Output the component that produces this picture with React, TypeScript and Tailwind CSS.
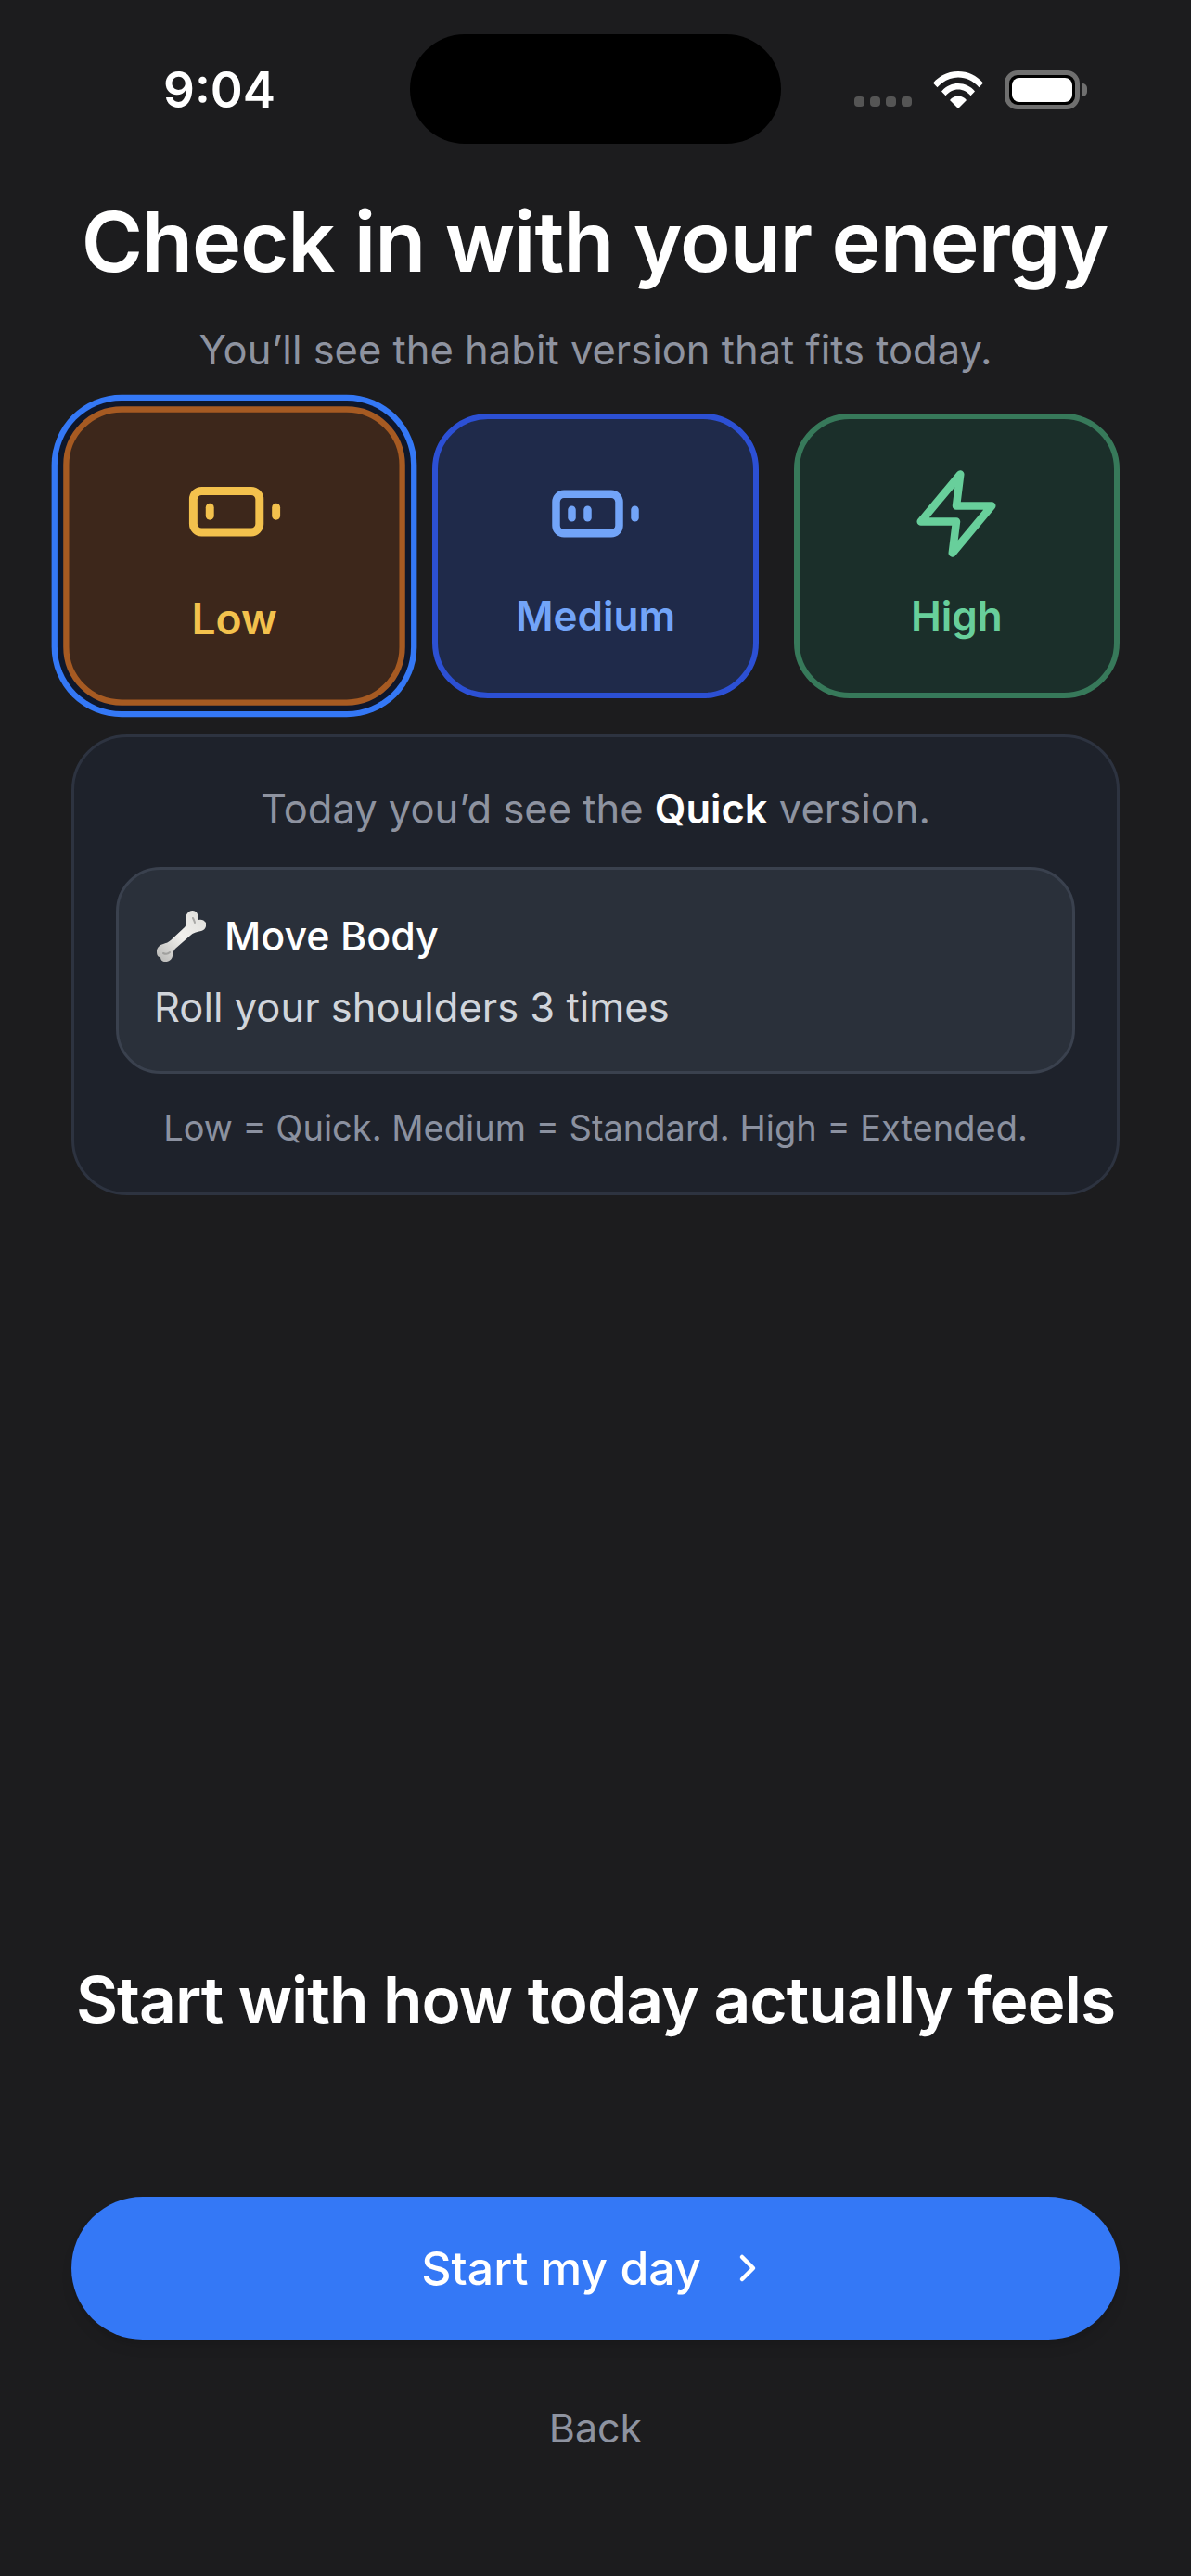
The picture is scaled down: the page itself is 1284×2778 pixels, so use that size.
import { ChevronRight } from "lucide-react";

function BatteryIcon({ bars, className }: { bars: number; className: string }) {
  return (
    <svg
      viewBox="0 0 24 24"
      fill="none"
      stroke="currentColor"
      strokeWidth={2}
      strokeLinecap="round"
      strokeLinejoin="round"
      className={className}
    >
      <rect x="2" y="7" width="16" height="10" rx="2" ry="2" />
      <path d="M22 11v2" />
      <path d="M6 11v2" />
      {bars > 1 && <path d="M10 11v2" />}
    </svg>
  );
}

function ZapIcon({ className }: { className: string }) {
  return (
    <svg
      viewBox="0 0 24 24"
      fill="none"
      stroke="currentColor"
      strokeWidth={2}
      strokeLinecap="round"
      strokeLinejoin="round"
      className={className}
    >
      <polygon points="13 2 3 14 12 14 11 22 21 10 12 10 13 2" />
    </svg>
  );
}

function WifiGlyph() {
  return (
    <svg viewBox="0 0 54 40" className="h-[40px] w-[54px]" fill="#ffffff">
      <path d="M0 12.5C7 4.5 16.500 0 27 0s20 4.500 27 12.500l-4.500 4.700C43.500 10.500 35.500 6.500 27 6.500S10.500 10.500 4.500 17.200z" />
      <path d="M9 21.500C13.500 16 20 13 27 13s13.500 3 18 8.500l-4.500 4.700C37 22 32.200 19.500 27 19.500S17 22 13.500 26.200z" />
      <path d="M18 31c2.300-2.800 5.500-4.500 9-4.500s6.700 1.700 9 4.500l-9 9z" />
    </svg>
  );
}

function BatteryStatus() {
  return (
    <div className="flex items-center gap-[3px]">
      <div className="h-[42px] w-[81px] rounded-[14px] border-[5px] border-[#6f6f6f] bg-black p-[3px]">
        <div className="h-full w-full rounded-[8px] bg-white" />
      </div>
      <div className="h-[14px] w-[5px] rounded-r-full bg-[#6f6f6f]" />
    </div>
  );
}

function BoneEmoji() {
  return (
    <svg viewBox="0 0 53 55" className="h-[55px] w-[53px] shrink-0">
      <defs>
        <linearGradient id="bone" x1="0" y1="1" x2="1" y2="0">
          <stop offset="0" stopColor="#b5b5b3" />
          <stop offset="0.5" stopColor="#f2f1ee" />
          <stop offset="1" stopColor="#dddcd9" />
        </linearGradient>
      </defs>
      <path
        fill="url(#bone)"
        d="M35 1c3-2 8-1 9 3 1 2 1 4 1 6 3-1 6 0 8 3 1 4-1 8-5 9-5 1-9 2-12 5L20 41c-2 2-3 5-3 8-1 4-4 6-8 6-3 0-5-2-5-5-3 0-4-2-4-6 0-4 3-7 7-8 3-1 6-2 8-4L30 18c2-2 1-5 1-8 0-4 1-7 4-9z"
      />
      <path
        fill="none"
        stroke="#8f8f8d"
        strokeWidth="2"
        strokeLinecap="round"
        opacity="0.7"
        d="M7 46c2 1 5 1 7-1M39 8c1 2 2 4 2 5"
      />
    </svg>
  );
}

const levels = [
  {
    label: "Medium",
    card: "border-[#2c50d4] bg-[#1f2a4a] text-[#72a4f8]",
    icon: <BatteryIcon bars={2} className="h-[102px] w-[102px]" />,
  },
  {
    label: "High",
    card: "border-[#37795a] bg-[#1b2f2a] text-[#68cf9b]",
    icon: <ZapIcon className="h-[102px] w-[102px]" />,
  },
];

export default function App() {
  return (
    <div
      className="flex h-[2778px] w-full flex-col overflow-hidden bg-[#1c1c1e] text-white"
      style={{ fontFamily: '"Inter", "Liberation Sans", sans-serif' }}
    >
      <div className="grid grid-cols-[442px_400px_1fr] pt-[37px]">
        <div className="flex h-[118px] items-center pl-[176px] pt-[2px] text-[53px] font-semibold leading-none">
          9:04
        </div>
        <div className="h-[118px] rounded-full bg-black" />
        <div className="flex h-[118px] items-center pl-[79px] pt-[2px]">
          <div className="mt-[24px] flex gap-[6px]">
            <span className="h-[11px] w-[11px] rounded-[4px] bg-[#555555]" />
            <span className="h-[11px] w-[11px] rounded-[4px] bg-[#555555]" />
            <span className="h-[11px] w-[11px] rounded-[4px] bg-[#555555]" />
            <span className="h-[11px] w-[11px] rounded-[4px] bg-[#555555]" />
          </div>
          <div className="ml-[23px] mr-[23px]">
            <WifiGlyph />
          </div>
          <BatteryStatus />
        </div>
      </div>

      <main className="flex flex-1 flex-col px-[77px]">
        <h1 className="-ml-[2px] mt-[52px] whitespace-nowrap text-center text-[90px] font-semibold leading-[108px] tracking-[-1.15px]">
          Check in with your energy
        </h1>
        <p className="mt-[26px] text-center text-[43.5px] leading-[72px] text-[#8e93a0]">
          You’ll see the habit version that fits today.
        </p>

        <div className="mt-[33px] grid grid-cols-3 gap-[38px]">
          <button className="flex h-[307px] scale-105 flex-col items-center justify-center rounded-[60px] border-[6px] border-[#a65a22] bg-[#3d271b] text-[#f3c14d] ring-[6px] ring-[#3478f6] ring-offset-[6px] ring-offset-[#0f172a]">
            <BatteryIcon bars={1} className="h-[102px] w-[102px]" />
            <span className="mt-[26px] text-[44px] font-semibold leading-[66px]">Low</span>
          </button>
          {levels.map((level) => (
            <button
              key={level.label}
              className={`flex h-[307px] flex-col items-center justify-center rounded-[60px] border-[6px] ${level.card}`}
            >
              {level.icon}
              <span className="mt-[26px] text-[44px] font-semibold leading-[66px]">
                {level.label}
              </span>
            </button>
          ))}
        </div>

        <section className="mt-[39px] h-[497px] rounded-[60px] border-[3px] border-[#2d3340] bg-[#1e222b] px-[45px] pt-[44px]">
          <p className="text-center text-[43.5px] leading-[66px] text-[#8e93a0]">
            Today you’d see the <span className="font-semibold text-white">Quick</span> version.
          </p>
          <div className="mt-[30px] h-[223px] rounded-[48px] border-[3px] border-[#3a414e] bg-[#2a303a] px-[41px] pt-[38px]">
            <div className="flex h-[66px] items-center gap-[20px]">
              <BoneEmoji />
              <span className="text-[43px] font-medium leading-[66px]">Move Body</span>
            </div>
            <p className="-ml-[3px] mt-[11px] text-[43.5px] leading-[66px] text-[#d1d5db]">
              Roll your shoulders 3 times
            </p>
          </div>
          <p className="mt-[31px] text-center text-[38px] leading-[54px] text-[#8b91a0]">
            Low = Quick. Medium = Standard. High = Extended.
          </p>
        </section>

        <h2 className="mt-auto whitespace-nowrap text-center text-[69.5px] font-semibold leading-[86px] tracking-[-1px]">
          Start with how today actually feels
        </h2>
        <button className="mt-[169px] flex h-[154px] items-center justify-center gap-[26px] rounded-full bg-[#3478f6] text-[50px] font-medium shadow-lg">
          Start my day
          <ChevronRight className="h-[48px] w-[48px]" strokeWidth={2.25} />
        </button>
        <button className="mb-[124px] mt-[59px] text-center text-[43px] leading-[72px] text-[#8e93a0]">
          Back
        </button>
      </main>
    </div>
  );
}
